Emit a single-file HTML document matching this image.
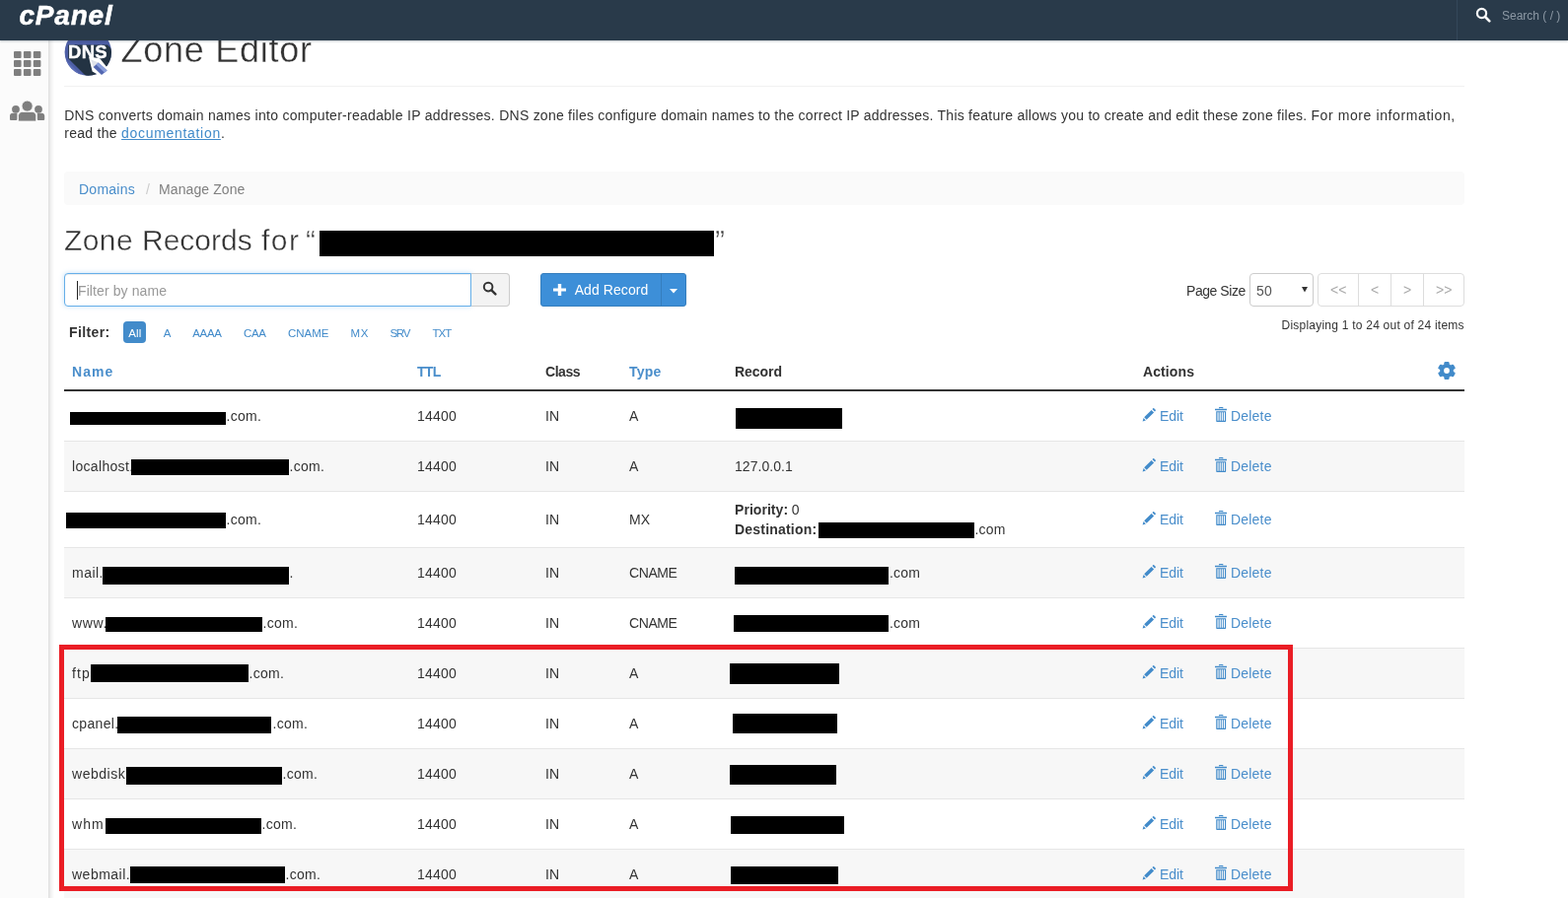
<!DOCTYPE html>
<html lang="en">
<head>
<meta charset="utf-8">
<title>Zone Editor</title>
<style>
*{box-sizing:border-box}
html,body{margin:0;padding:0}
body{width:1590px;height:911px;overflow:hidden;background:#fff;color:#333;font-family:"Liberation Sans",sans-serif;font-size:14px;line-height:20px;position:relative}
.abs,.t,.row,.rl,.bk,.ic{position:absolute}
.t{white-space:nowrap;line-height:20px;font-size:14px;letter-spacing:.2px}
.lk{color:#4a8ecb}
b{font-weight:bold}
#hdr{left:0;top:0;width:1590px;height:41px;background:#293a4a;box-shadow:0 1px 2px rgba(41,58,74,.3);z-index:5}
#logo{left:19.5px;top:0px;font-size:28px;line-height:32px;font-weight:bold;font-style:italic;color:#fff;letter-spacing:.8px;-webkit-text-stroke:.5px #fff}
#hs{left:1477px;top:0;width:113px;height:41px;border-left:1px solid #34475a}
#hst{left:1523px;top:6px;font-size:12px;color:#8c98a4;letter-spacing:0}
#side{left:0;top:41px;width:49px;height:870px;background:#fbfbfb}
#sidesh{left:49px;top:41px;width:6px;height:870px;background:linear-gradient(to right,rgba(0,0,0,.13),rgba(0,0,0,.05) 45%,rgba(0,0,0,0))}
#h1{left:122.5px;top:27px;font-size:36px;line-height:48px;color:#333;letter-spacing:.75px;-webkit-text-stroke:.35px #fff}
#hr1{left:65px;top:87px;width:1420px;height:1px;background:#f1f1f1}
#desc{left:65.2px;top:108px;width:1460px;line-height:18px;letter-spacing:.29px;white-space:normal}
#desc a{color:#428bca;text-decoration:underline}
#bc{left:65px;top:174px;width:1420px;height:34px;background:#fafafa;border-radius:4px}
.h2{top:224px;font-size:30px;line-height:40px;-webkit-text-stroke:.4px #fff}
#fin{left:65px;top:277px;width:413px;height:34px;border:1px solid #66afe9;border-radius:4px 0 0 4px;background:#fff;box-shadow:inset 0 1px 1px rgba(0,0,0,.075),0 0 5px rgba(102,175,233,.4)}
#fbtn{left:478px;top:277px;width:39px;height:34px;border:1px solid #ccc;border-left:0;border-radius:0 4px 4px 0;background:#f3f3f3}
#add{left:548px;top:277px;width:148px;height:34px;border:1px solid #357ebd;border-radius:3px;background:#3d8fd8}
#addsep{left:670px;top:277px;width:1px;height:34px;background:#357ebd}
#sel{left:1267px;top:277px;width:65px;height:34px;border:1px solid #ccc;border-radius:4px;background:#fff}
#pg{left:1336px;top:277px;width:149px;height:34px;border:1px solid #ddd;border-radius:4px;background:#fff}
.pd{width:1px;height:34px;top:277px;background:#ddd}
.pt{color:#aaa;top:284px;letter-spacing:0}
.f{font-size:11.5px;top:328px;color:#428bca;letter-spacing:-.2px}
#fall{left:125px;top:326px;width:23px;height:22px;border-radius:4px;background:#428bca}
.th{font-weight:bold;top:367px}
#thb{left:65px;top:395px;width:1420px;height:2px;background:#333}
.row{left:65px;width:1420px}
.shade{background:#f7f7f7}
.rl{left:65px;width:1420px;height:1px;background:#e6e6e6}
.bk{background:#000}
#red{left:60px;top:654px;width:1251px;height:250px;border:5px solid #ea1d25}
#page{position:absolute;left:0;top:0;width:1590px;height:911px;overflow:hidden;will-change:transform}
</style>
</head>
<body>
<div id="page">
<div id="hdr" class="abs">
  <div id="logo" class="abs">cPanel</div>
  <div id="hs" class="abs"></div>
  <svg class="ic" style="left:1496px;top:7px" width="16" height="16" viewBox="0 0 16 16"><circle cx="6.5" cy="6.5" r="4.6" fill="none" stroke="#fff" stroke-width="2.2"/><path d="M10 10l4.3 4.3" stroke="#fff" stroke-width="2.6" stroke-linecap="round"/></svg>
  <div id="hst" class="t">Search ( / )</div>
</div>
<div id="side" class="abs"></div><div id="sidesh" class="abs"></div>
<svg class="ic" style="left:14px;top:52px" width="28" height="26" viewBox="0 0 28 26" fill="#7f7f7f">
  <rect x="0" y="0" width="7.6" height="7" rx="1"/><rect x="9.9" y="0" width="7.6" height="7" rx="1"/><rect x="19.8" y="0" width="7.6" height="7" rx="1"/>
  <rect x="0" y="9" width="7.6" height="7" rx="1"/><rect x="9.9" y="9" width="7.6" height="7" rx="1"/><rect x="19.8" y="9" width="7.6" height="7" rx="1"/>
  <rect x="0" y="18" width="7.6" height="7" rx="1"/><rect x="9.9" y="18" width="7.6" height="7" rx="1"/><rect x="19.8" y="18" width="7.6" height="7" rx="1"/>
</svg>
<svg class="ic" style="left:9px;top:101px" width="38" height="23" viewBox="0 0 38 23" fill="#7f7f7f">
  <circle cx="7" cy="9.8" r="3.9"/><circle cx="30" cy="9.8" r="3.9"/>
  <path d="M1 20v-3.5c0-1.6 1.2-2.8 2.8-2.8h4.6v6.3c0 .5-.4 .9-.9 .9H1.9c-.5 0-.9-.4-.9-.9zM36.2 20v-3.5c0-1.6-1.2-2.8-2.8-2.8h-4.6v6.3c0 .5 .4 .9 .9 .9h5.6c.5 0 .9-.4 .9-.9z"/>
  <circle cx="18.6" cy="6.6" r="5.6" stroke="#fafafa" stroke-width="1"/>
  <path d="M9.5 21v-4.6c0-2.2 1.8-4 4-4h10.200000000000001c2.2 0 4 1.8 4 4V21c0 .6-.5 1-1 1H10.5c-.6 0-1-.4-1-1z" stroke="#fafafa" stroke-width=".8"/>
</svg>

<svg class="ic" style="left:65px;top:29px" width="49" height="49" viewBox="0 0 49 49">
  <defs><clipPath id="cc"><circle cx="24.3" cy="24" r="23.7"/></clipPath></defs>
  <circle cx="24.3" cy="24" r="23.7" fill="#4d5ea5"/>
  <g clip-path="url(#cc)">
    <path d="M-4 26L30 60L20 60L-8 32z" fill="#5b6db6"/>
    <path d="M4.2 16.5L44 16.5L84 56.5L44 70L4.2 30.2z" fill="#233343"/>
  </g>
  <text x="24" y="30" text-anchor="middle" font-family="Liberation Sans, sans-serif" font-weight="bold" font-size="18.5" fill="#fff" stroke="#fff" stroke-width=".4" letter-spacing=".3">DNS</text>
  <path d="M25 28.6L28.6 43.5L37 48.2L45.2 41.6L36.2 30.2z" fill="#fff"/>
  <path d="M27.4 31.6l2.2 7.4 5.2-4.6z" fill="#dfe2ea"/>
  <path d="M29.6 39l5.200000000000003-4.6L43.6 42.6 38 47z" fill="#5266b0"/>
  <path d="M32.4 36.5l2.4-2.1L43.6 42.6 41 44.7z" fill="#8a9fdc"/>
</svg>
<div id="h1" class="t">Zone Editor</div>
<div id="hr1" class="abs"></div>
<div id="desc" class="t"><span style="letter-spacing:.285px">DNS converts domain names into computer-readable IP addresses. </span><span style="letter-spacing:.24px">DNS zone files configure domain names to the correct IP addresses. </span><span style="letter-spacing:.24px">This feature allows you to create and edit these zone files. </span><span style="letter-spacing:.6px">For more information,</span><br>read the <a style="letter-spacing:.69px">documentation</a>.</div>

<div id="bc" class="abs"></div>
<div class="t lk" style="left:80px;top:182px;letter-spacing:.25px">Domains</div>
<div class="t" style="left:148px;top:182px;color:#ccc">/</div>
<div class="t" style="left:161px;top:182px;color:#808080;letter-spacing:.1px">Manage Zone</div>

<div class="t h2" style="left:65px;letter-spacing:.4px">Zone</div><div class="t h2" style="left:144px;letter-spacing:0">Records</div><div class="t h2" style="left:265px;letter-spacing:1.5px">for</div><div class="t h2" style="left:310px">“</div>
<div class="bk" style="left:324px;top:234px;width:400px;height:26px"></div>
<div class="t h2" style="left:725px">”</div>

<div id="fin" class="abs"></div>
<div class="abs" style="left:78px;top:285px;width:1px;height:19px;background:#222"></div>
<div class="t" style="left:79px;top:285px;color:#999;letter-spacing:.1px">Filter by name</div>
<div id="fbtn" class="abs"></div>
<svg class="ic" style="left:489.3px;top:285.3px" width="15" height="15" viewBox="0 0 16 16"><circle cx="6.5" cy="6.5" r="4.6" fill="none" stroke="#333" stroke-width="2.1"/><path d="M10 10l4.3 4.3" stroke="#333" stroke-width="2.5" stroke-linecap="round"/></svg>
<div id="add" class="abs"></div>
<div id="addsep" class="abs"></div>
<svg class="ic" style="left:561px;top:288px" width="13" height="12" viewBox="0 0 13 13" preserveAspectRatio="none"><path d="M4.8 0h3.4v4.8H13v3.4H8.2V13H4.8V8.200000000000001H0V4.8h4.8z" fill="#fff"/></svg>
<div class="t" style="left:582.7px;top:284px;color:#fff;letter-spacing:.08px">Add Record</div>
<svg class="ic" style="left:679px;top:293px" width="8" height="5" viewBox="0 0 8 5"><path d="M0 0h8L4 4.6z" fill="#fff"/></svg>

<div class="t" style="left:1203px;top:285px;letter-spacing:-.45px">Page Size</div>
<div id="sel" class="abs"></div>
<div class="t" style="left:1274px;top:285px;color:#555">50</div>
<svg class="ic" style="left:1320.2px;top:291px" width="6" height="6" viewBox="0 0 6 6"><path d="M0 0h6L3 5.6z" fill="#333"/></svg>
<div id="pg" class="abs"></div>
<div class="pd abs" style="left:1377px"></div><div class="pd abs" style="left:1410px"></div><div class="pd abs" style="left:1443px"></div>
<div class="t pt" style="left:1349px">&lt;&lt;</div>
<div class="t pt" style="left:1390px">&lt;</div>
<div class="t pt" style="left:1423px">&gt;</div>
<div class="t pt" style="left:1456px">&gt;&gt;</div>
<div class="t" style="left:1299.5px;top:320px;font-size:12px;letter-spacing:.23px">Displaying 1 to 24 out of 24 items</div>

<div class="t" style="left:70px;top:327px;font-weight:bold;letter-spacing:.37px">Filter:</div>
<div id="fall" class="abs"></div>
<div class="t f" style="left:130.3px;color:#fff;letter-spacing:.1px">All</div>
<div class="t f" style="left:165.7px">A</div>
<div class="t f" style="left:195.2px;letter-spacing:-.3px">AAAA</div>
<div class="t f" style="left:247px;letter-spacing:-.4px">CAA</div>
<div class="t f" style="left:292px;letter-spacing:0">CNAME</div>
<div class="t f" style="left:355.6px;letter-spacing:.5px">MX</div>
<div class="t f" style="left:395.4px;letter-spacing:-1.2px">SRV</div>
<div class="t f" style="left:438.6px;letter-spacing:-1.05px">TXT</div>

<div class="t th lk" style="left:73px;letter-spacing:1.05px">Name</div>
<div class="t th lk" style="left:423px;letter-spacing:-.7px">TTL</div>
<div class="t th" style="left:553px;letter-spacing:-.45px">Class</div>
<div class="t th lk" style="left:638px">Type</div>
<div class="t th" style="left:745px;letter-spacing:-.05px">Record</div>
<div class="t th" style="left:1159px;letter-spacing:.1px">Actions</div>
<svg class="ic" style="left:1458.4px;top:366.9px" width="18" height="18" viewBox="0 0 18 18"><g fill="#428bca"><circle cx="9" cy="9" r="6.9"/><rect x="6.4" y="0" width="5.2" height="18" rx="1.2"/><rect x="6.4" y="0" width="5.2" height="18" rx="1.2" transform="rotate(60 9 9)"/><rect x="6.4" y="0" width="5.2" height="18" rx="1.2" transform="rotate(120 9 9)"/></g><circle cx="9" cy="9" r="2.9" fill="#fff"/></svg>
<div id="thb" class="abs"></div>

<div class="row" style="top:397px;height:50px"></div>
<div class="rl" style="top:447px"></div>
<div class="t" style="left:229.5px;top:412.0px;letter-spacing:.3px">.com.</div>
<div class="bk" style="left:71px;top:418px;width:158px;height:13px"></div>
<div class="t" style="left:423px;top:412.0px">14400</div>
<div class="t" style="left:553px;top:412.0px">IN</div>
<div class="t" style="left:638px;top:412.0px;letter-spacing:.2px">A</div>
<div class="bk" style="left:746px;top:414px;width:108px;height:21px"></div>
<svg class="ic" style="left:1157.6px;top:414.0px" width="14" height="14" viewBox="0 0 14 14"><path d="M9.6 1.9l2.5 2.5-7.4 7.4-2.5-2.5zM10.4 1.1l.7-.7c.4-.4.9-.4 1.3 0l1.2 1.2c.4.4.4.9 0 1.3l-.7.7zM1.6 10.1l2.3 2.3-3.3 1z" fill="#428bca"/></svg>
<div class="t lk" style="left:1176px;top:412.0px;letter-spacing:-.1px">Edit</div>
<svg class="ic" style="left:1231.8px;top:413.0px" width="12.4" height="15" viewBox="0 0 13 15" preserveAspectRatio="none"><path d="M4.3 0h4.4v1.2h-1V1H5.3v.2h-1zM0 1.8h13v1.5H0zM1.3 4.2h10.4V14c0 .6-.4 1-1 1H2.3c-.6 0-1-.4-1-1zM2.6 5.3v8.5h1.2V5.3zM4.9 5.3v8.5h1.2V5.3zM7.1 5.3v8.5h1.2V5.3zM9.3 5.3v8.5h1.2V5.3z" fill="#428bca" fill-rule="evenodd"/></svg>
<div class="t lk" style="left:1248px;top:412.0px">Delete</div>
<div class="row shade" style="top:448px;height:50px"></div>
<div class="rl" style="top:498px"></div>
<div class="t" style="left:73px;top:463.0px;letter-spacing:0.32px">localhost.</div>
<div class="t" style="left:293.5px;top:463.0px;letter-spacing:.3px">.com.</div>
<div class="bk" style="left:133px;top:466px;width:160px;height:16px"></div>
<div class="t" style="left:423px;top:463.0px">14400</div>
<div class="t" style="left:553px;top:463.0px">IN</div>
<div class="t" style="left:638px;top:463.0px;letter-spacing:.2px">A</div>
<div class="t" style="left:745px;top:463.0px;letter-spacing:.05px">127.0.0.1</div>
<svg class="ic" style="left:1157.6px;top:465.0px" width="14" height="14" viewBox="0 0 14 14"><path d="M9.6 1.9l2.5 2.5-7.4 7.4-2.5-2.5zM10.4 1.1l.7-.7c.4-.4.9-.4 1.3 0l1.2 1.2c.4.4.4.9 0 1.3l-.7.7zM1.6 10.1l2.3 2.3-3.3 1z" fill="#428bca"/></svg>
<div class="t lk" style="left:1176px;top:463.0px;letter-spacing:-.1px">Edit</div>
<svg class="ic" style="left:1231.8px;top:464.0px" width="12.4" height="15" viewBox="0 0 13 15" preserveAspectRatio="none"><path d="M4.3 0h4.4v1.2h-1V1H5.3v.2h-1zM0 1.8h13v1.5H0zM1.3 4.2h10.4V14c0 .6-.4 1-1 1H2.3c-.6 0-1-.4-1-1zM2.6 5.3v8.5h1.2V5.3zM4.9 5.3v8.5h1.2V5.3zM7.1 5.3v8.5h1.2V5.3zM9.3 5.3v8.5h1.2V5.3z" fill="#428bca" fill-rule="evenodd"/></svg>
<div class="t lk" style="left:1248px;top:463.0px">Delete</div>
<div class="row" style="top:499px;height:56px"></div>
<div class="rl" style="top:555px"></div>
<div class="t" style="left:229.5px;top:517.0px;letter-spacing:.3px">.com.</div>
<div class="bk" style="left:67px;top:520px;width:162px;height:16px"></div>
<div class="t" style="left:423px;top:517.0px">14400</div>
<div class="t" style="left:553px;top:517.0px">IN</div>
<div class="t" style="left:638px;top:517.0px;letter-spacing:.2px">MX</div>
<div class="t" style="left:745px;top:507.0px"><b style="letter-spacing:.05px">Priority:</b><span style="margin-left:3.5px">0</span></div>
<div class="t" style="left:745px;top:527.0px"><b>Destination:</b></div>
<div class="bk" style="left:830px;top:530px;width:158px;height:16px"></div>
<div class="t" style="left:988.5px;top:527.0px">.com</div>
<svg class="ic" style="left:1157.6px;top:519.0px" width="14" height="14" viewBox="0 0 14 14"><path d="M9.6 1.9l2.5 2.5-7.4 7.4-2.5-2.5zM10.4 1.1l.7-.7c.4-.4.9-.4 1.3 0l1.2 1.2c.4.4.4.9 0 1.3l-.7.7zM1.6 10.1l2.3 2.3-3.3 1z" fill="#428bca"/></svg>
<div class="t lk" style="left:1176px;top:517.0px;letter-spacing:-.1px">Edit</div>
<svg class="ic" style="left:1231.8px;top:518.0px" width="12.4" height="15" viewBox="0 0 13 15" preserveAspectRatio="none"><path d="M4.3 0h4.4v1.2h-1V1H5.3v.2h-1zM0 1.8h13v1.5H0zM1.3 4.2h10.4V14c0 .6-.4 1-1 1H2.3c-.6 0-1-.4-1-1zM2.6 5.3v8.5h1.2V5.3zM4.9 5.3v8.5h1.2V5.3zM7.1 5.3v8.5h1.2V5.3zM9.3 5.3v8.5h1.2V5.3z" fill="#428bca" fill-rule="evenodd"/></svg>
<div class="t lk" style="left:1248px;top:517.0px">Delete</div>
<div class="row shade" style="top:556px;height:50px"></div>
<div class="rl" style="top:606px"></div>
<div class="t" style="left:73px;top:571.0px;letter-spacing:0.47px">mail.</div>
<div class="t" style="left:293.5px;top:571.0px;letter-spacing:.3px">.</div>
<div class="bk" style="left:104px;top:575px;width:189px;height:18px"></div>
<div class="t" style="left:423px;top:571.0px">14400</div>
<div class="t" style="left:553px;top:571.0px">IN</div>
<div class="t" style="left:638px;top:571.0px;letter-spacing:-.4px">CNAME</div>
<div class="bk" style="left:745px;top:575px;width:156px;height:18px"></div>
<div class="t" style="left:902px;top:571.0px">.com</div>
<svg class="ic" style="left:1157.6px;top:573.0px" width="14" height="14" viewBox="0 0 14 14"><path d="M9.6 1.9l2.5 2.5-7.4 7.4-2.5-2.5zM10.4 1.1l.7-.7c.4-.4.9-.4 1.3 0l1.2 1.2c.4.4.4.9 0 1.3l-.7.7zM1.6 10.1l2.3 2.3-3.3 1z" fill="#428bca"/></svg>
<div class="t lk" style="left:1176px;top:571.0px;letter-spacing:-.1px">Edit</div>
<svg class="ic" style="left:1231.8px;top:572.0px" width="12.4" height="15" viewBox="0 0 13 15" preserveAspectRatio="none"><path d="M4.3 0h4.4v1.2h-1V1H5.3v.2h-1zM0 1.8h13v1.5H0zM1.3 4.2h10.4V14c0 .6-.4 1-1 1H2.3c-.6 0-1-.4-1-1zM2.6 5.3v8.5h1.2V5.3zM4.9 5.3v8.5h1.2V5.3zM7.1 5.3v8.5h1.2V5.3zM9.3 5.3v8.5h1.2V5.3z" fill="#428bca" fill-rule="evenodd"/></svg>
<div class="t lk" style="left:1248px;top:571.0px">Delete</div>
<div class="row" style="top:607px;height:50px"></div>
<div class="rl" style="top:657px"></div>
<div class="t" style="left:73px;top:622.0px;letter-spacing:0.62px">www.</div>
<div class="t" style="left:266.5px;top:622.0px;letter-spacing:.3px">.com.</div>
<div class="bk" style="left:107px;top:626px;width:159px;height:15px"></div>
<div class="t" style="left:423px;top:622.0px">14400</div>
<div class="t" style="left:553px;top:622.0px">IN</div>
<div class="t" style="left:638px;top:622.0px;letter-spacing:-.4px">CNAME</div>
<div class="bk" style="left:744px;top:624px;width:157px;height:17px"></div>
<div class="t" style="left:902px;top:622.0px">.com</div>
<svg class="ic" style="left:1157.6px;top:624.0px" width="14" height="14" viewBox="0 0 14 14"><path d="M9.6 1.9l2.5 2.5-7.4 7.4-2.5-2.5zM10.4 1.1l.7-.7c.4-.4.9-.4 1.3 0l1.2 1.2c.4.4.4.9 0 1.3l-.7.7zM1.6 10.1l2.3 2.3-3.3 1z" fill="#428bca"/></svg>
<div class="t lk" style="left:1176px;top:622.0px;letter-spacing:-.1px">Edit</div>
<svg class="ic" style="left:1231.8px;top:623.0px" width="12.4" height="15" viewBox="0 0 13 15" preserveAspectRatio="none"><path d="M4.3 0h4.4v1.2h-1V1H5.3v.2h-1zM0 1.8h13v1.5H0zM1.3 4.2h10.4V14c0 .6-.4 1-1 1H2.3c-.6 0-1-.4-1-1zM2.6 5.3v8.5h1.2V5.3zM4.9 5.3v8.5h1.2V5.3zM7.1 5.3v8.5h1.2V5.3zM9.3 5.3v8.5h1.2V5.3z" fill="#428bca" fill-rule="evenodd"/></svg>
<div class="t lk" style="left:1248px;top:622.0px">Delete</div>
<div class="row shade" style="top:658px;height:50px"></div>
<div class="rl" style="top:708px"></div>
<div class="t" style="left:73px;top:673.0px;letter-spacing:1.07px">ftp.</div>
<div class="t" style="left:252.5px;top:673.0px;letter-spacing:.3px">.com.</div>
<div class="bk" style="left:92px;top:674px;width:160px;height:18px"></div>
<div class="t" style="left:423px;top:673.0px">14400</div>
<div class="t" style="left:553px;top:673.0px">IN</div>
<div class="t" style="left:638px;top:673.0px;letter-spacing:.2px">A</div>
<div class="bk" style="left:740px;top:673px;width:111px;height:21px"></div>
<svg class="ic" style="left:1157.6px;top:675.0px" width="14" height="14" viewBox="0 0 14 14"><path d="M9.6 1.9l2.5 2.5-7.4 7.4-2.5-2.5zM10.4 1.1l.7-.7c.4-.4.9-.4 1.3 0l1.2 1.2c.4.4.4.9 0 1.3l-.7.7zM1.6 10.1l2.3 2.3-3.3 1z" fill="#428bca"/></svg>
<div class="t lk" style="left:1176px;top:673.0px;letter-spacing:-.1px">Edit</div>
<svg class="ic" style="left:1231.8px;top:674.0px" width="12.4" height="15" viewBox="0 0 13 15" preserveAspectRatio="none"><path d="M4.3 0h4.4v1.2h-1V1H5.3v.2h-1zM0 1.8h13v1.5H0zM1.3 4.2h10.4V14c0 .6-.4 1-1 1H2.3c-.6 0-1-.4-1-1zM2.6 5.3v8.5h1.2V5.3zM4.9 5.3v8.5h1.2V5.3zM7.1 5.3v8.5h1.2V5.3zM9.3 5.3v8.5h1.2V5.3z" fill="#428bca" fill-rule="evenodd"/></svg>
<div class="t lk" style="left:1248px;top:673.0px">Delete</div>
<div class="row" style="top:709px;height:50px"></div>
<div class="rl" style="top:759px"></div>
<div class="t" style="left:73px;top:724.0px;letter-spacing:0.32px">cpanel.</div>
<div class="t" style="left:276.5px;top:724.0px;letter-spacing:.3px">.com.</div>
<div class="bk" style="left:119px;top:727px;width:156px;height:17px"></div>
<div class="t" style="left:423px;top:724.0px">14400</div>
<div class="t" style="left:553px;top:724.0px">IN</div>
<div class="t" style="left:638px;top:724.0px;letter-spacing:.2px">A</div>
<div class="bk" style="left:743px;top:724px;width:106px;height:20px"></div>
<svg class="ic" style="left:1157.6px;top:726.0px" width="14" height="14" viewBox="0 0 14 14"><path d="M9.6 1.9l2.5 2.5-7.4 7.4-2.5-2.5zM10.4 1.1l.7-.7c.4-.4.9-.4 1.3 0l1.2 1.2c.4.4.4.9 0 1.3l-.7.7zM1.6 10.1l2.3 2.3-3.3 1z" fill="#428bca"/></svg>
<div class="t lk" style="left:1176px;top:724.0px;letter-spacing:-.1px">Edit</div>
<svg class="ic" style="left:1231.8px;top:725.0px" width="12.4" height="15" viewBox="0 0 13 15" preserveAspectRatio="none"><path d="M4.3 0h4.4v1.2h-1V1H5.3v.2h-1zM0 1.8h13v1.5H0zM1.3 4.2h10.4V14c0 .6-.4 1-1 1H2.3c-.6 0-1-.4-1-1zM2.6 5.3v8.5h1.2V5.3zM4.9 5.3v8.5h1.2V5.3zM7.1 5.3v8.5h1.2V5.3zM9.3 5.3v8.5h1.2V5.3z" fill="#428bca" fill-rule="evenodd"/></svg>
<div class="t lk" style="left:1248px;top:724.0px">Delete</div>
<div class="row shade" style="top:760px;height:50px"></div>
<div class="rl" style="top:810px"></div>
<div class="t" style="left:73px;top:775.0px;letter-spacing:0.52px">webdisk.</div>
<div class="t" style="left:286.5px;top:775.0px;letter-spacing:.3px">.com.</div>
<div class="bk" style="left:128px;top:778px;width:158px;height:18px"></div>
<div class="t" style="left:423px;top:775.0px">14400</div>
<div class="t" style="left:553px;top:775.0px">IN</div>
<div class="t" style="left:638px;top:775.0px;letter-spacing:.2px">A</div>
<div class="bk" style="left:740px;top:776px;width:108px;height:20px"></div>
<svg class="ic" style="left:1157.6px;top:777.0px" width="14" height="14" viewBox="0 0 14 14"><path d="M9.6 1.9l2.5 2.5-7.4 7.4-2.5-2.5zM10.4 1.1l.7-.7c.4-.4.9-.4 1.3 0l1.2 1.2c.4.4.4.9 0 1.3l-.7.7zM1.6 10.1l2.3 2.3-3.3 1z" fill="#428bca"/></svg>
<div class="t lk" style="left:1176px;top:775.0px;letter-spacing:-.1px">Edit</div>
<svg class="ic" style="left:1231.8px;top:776.0px" width="12.4" height="15" viewBox="0 0 13 15" preserveAspectRatio="none"><path d="M4.3 0h4.4v1.2h-1V1H5.3v.2h-1zM0 1.8h13v1.5H0zM1.3 4.2h10.4V14c0 .6-.4 1-1 1H2.3c-.6 0-1-.4-1-1zM2.6 5.3v8.5h1.2V5.3zM4.9 5.3v8.5h1.2V5.3zM7.1 5.3v8.5h1.2V5.3zM9.3 5.3v8.5h1.2V5.3z" fill="#428bca" fill-rule="evenodd"/></svg>
<div class="t lk" style="left:1248px;top:775.0px">Delete</div>
<div class="row" style="top:811px;height:50px"></div>
<div class="rl" style="top:861px"></div>
<div class="t" style="left:73px;top:826.0px;letter-spacing:1.1px">whm.</div>
<div class="t" style="left:265.5px;top:826.0px;letter-spacing:.3px">.com.</div>
<div class="bk" style="left:107px;top:830px;width:158px;height:16px"></div>
<div class="t" style="left:423px;top:826.0px">14400</div>
<div class="t" style="left:553px;top:826.0px">IN</div>
<div class="t" style="left:638px;top:826.0px;letter-spacing:.2px">A</div>
<div class="bk" style="left:741px;top:828px;width:115px;height:18px"></div>
<svg class="ic" style="left:1157.6px;top:828.0px" width="14" height="14" viewBox="0 0 14 14"><path d="M9.6 1.9l2.5 2.5-7.4 7.4-2.5-2.5zM10.4 1.1l.7-.7c.4-.4.9-.4 1.3 0l1.2 1.2c.4.4.4.9 0 1.3l-.7.7zM1.6 10.1l2.3 2.3-3.3 1z" fill="#428bca"/></svg>
<div class="t lk" style="left:1176px;top:826.0px;letter-spacing:-.1px">Edit</div>
<svg class="ic" style="left:1231.8px;top:827.0px" width="12.4" height="15" viewBox="0 0 13 15" preserveAspectRatio="none"><path d="M4.3 0h4.4v1.2h-1V1H5.3v.2h-1zM0 1.8h13v1.5H0zM1.3 4.2h10.4V14c0 .6-.4 1-1 1H2.3c-.6 0-1-.4-1-1zM2.6 5.3v8.5h1.2V5.3zM4.9 5.3v8.5h1.2V5.3zM7.1 5.3v8.5h1.2V5.3zM9.3 5.3v8.5h1.2V5.3z" fill="#428bca" fill-rule="evenodd"/></svg>
<div class="t lk" style="left:1248px;top:826.0px">Delete</div>
<div class="row shade" style="top:862px;height:50px"></div>
<div class="rl" style="top:912px"></div>
<div class="t" style="left:73px;top:877.0px;letter-spacing:0.49px">webmail.</div>
<div class="t" style="left:289.5px;top:877.0px;letter-spacing:.3px">.com.</div>
<div class="bk" style="left:132px;top:879px;width:157px;height:17px"></div>
<div class="t" style="left:423px;top:877.0px">14400</div>
<div class="t" style="left:553px;top:877.0px">IN</div>
<div class="t" style="left:638px;top:877.0px;letter-spacing:.2px">A</div>
<div class="bk" style="left:741px;top:879px;width:109px;height:18px"></div>
<svg class="ic" style="left:1157.6px;top:879.0px" width="14" height="14" viewBox="0 0 14 14"><path d="M9.6 1.9l2.5 2.5-7.4 7.4-2.5-2.5zM10.4 1.1l.7-.7c.4-.4.9-.4 1.3 0l1.2 1.2c.4.4.4.9 0 1.3l-.7.7zM1.6 10.1l2.3 2.3-3.3 1z" fill="#428bca"/></svg>
<div class="t lk" style="left:1176px;top:877.0px;letter-spacing:-.1px">Edit</div>
<svg class="ic" style="left:1231.8px;top:878.0px" width="12.4" height="15" viewBox="0 0 13 15" preserveAspectRatio="none"><path d="M4.3 0h4.4v1.2h-1V1H5.3v.2h-1zM0 1.8h13v1.5H0zM1.3 4.2h10.4V14c0 .6-.4 1-1 1H2.3c-.6 0-1-.4-1-1zM2.6 5.3v8.5h1.2V5.3zM4.9 5.3v8.5h1.2V5.3zM7.1 5.3v8.5h1.2V5.3zM9.3 5.3v8.5h1.2V5.3z" fill="#428bca" fill-rule="evenodd"/></svg>
<div class="t lk" style="left:1248px;top:877.0px">Delete</div>

<div id="red" class="abs"></div>
</div>
</body>
</html>
